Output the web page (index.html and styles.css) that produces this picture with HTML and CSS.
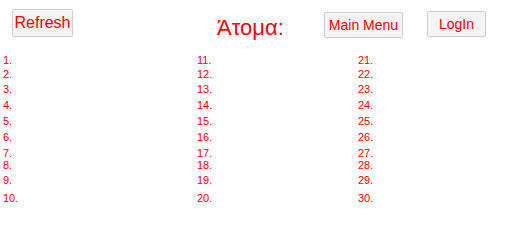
FILE: index.html
```html
<!DOCTYPE html>
<html lang="el">
<head>
<meta charset="utf-8">
<title>Άτομα</title>
<link rel="stylesheet" href="styles.css">
</head>
<body>
<header class="top">
  <div class="slot slot-refresh"><button class="btn btn-refresh">Refresh</button></div>
  <div class="slot slot-title"><h1 class="title">Άτομα:</h1></div>
  <div class="slot slot-menu"><button class="btn btn-menu">Main Menu</button></div>
  <div class="slot slot-login"><button class="btn btn-login">LogIn</button></div>
</header>
<ol class="people">
  <li>1.</li><li>2.</li><li>3.</li><li>4.</li><li>5.</li><li>6.</li><li>7.</li><li>8.</li><li>9.</li><li>10.</li>
  <li>11.</li><li>12.</li><li>13.</li><li>14.</li><li>15.</li><li>16.</li><li>17.</li><li>18.</li><li>19.</li><li>20.</li>
  <li>21.</li><li>22.</li><li>23.</li><li>24.</li><li>25.</li><li>26.</li><li>27.</li><li>28.</li><li>29.</li><li>30.</li>
</ol>
</body>
</html>
```
FILE: styles.css
```css
html, body {
  margin: 0;
  padding: 0;
  background: #ffffff;
  font-family: "Liberation Sans", Arial, sans-serif;
  color: #ff0000;
}

.top {
  display: flex;
  align-items: flex-start;
  height: 55px;
  padding-left: 12px;
  box-sizing: border-box;
}

.slot-refresh { width: 205px; }
.slot-title { width: 107px; }
.slot-menu { width: 103px; }

.btn {
  font-family: "Liberation Sans", Arial, sans-serif;
  color: #ff0000;
  background: #f4f4f4;
  border: 1px solid #cdcdcd;
  border-radius: 2px;
  padding: 0;
  box-sizing: border-box;
  text-align: center;
  cursor: pointer;
}

.btn-refresh {
  margin-top: 9px;
  width: 61px;
  height: 28px;
  font-size: 16px;
}

.btn-menu {
  margin-top: 12px;
  width: 79px;
  height: 26px;
  font-size: 14px;
}

.btn-login {
  margin-top: 11px;
  width: 59px;
  height: 26px;
  font-size: 14px;
}

.title {
  margin: 15px 0 0 0;
  font-size: 22px;
  font-weight: normal;
  line-height: 25px;
}

.people {
  list-style: none;
  margin: 0;
  padding: 0 0 0 3px;
  display: grid;
  grid-auto-flow: column;
  grid-template-columns: 194px 161px 1fr;
  grid-template-rows: 14px 15px 16px 16px 16px 16px 12px 15px 18px 16px;
  font-size: 11px;
  line-height: 11px;
}
```
